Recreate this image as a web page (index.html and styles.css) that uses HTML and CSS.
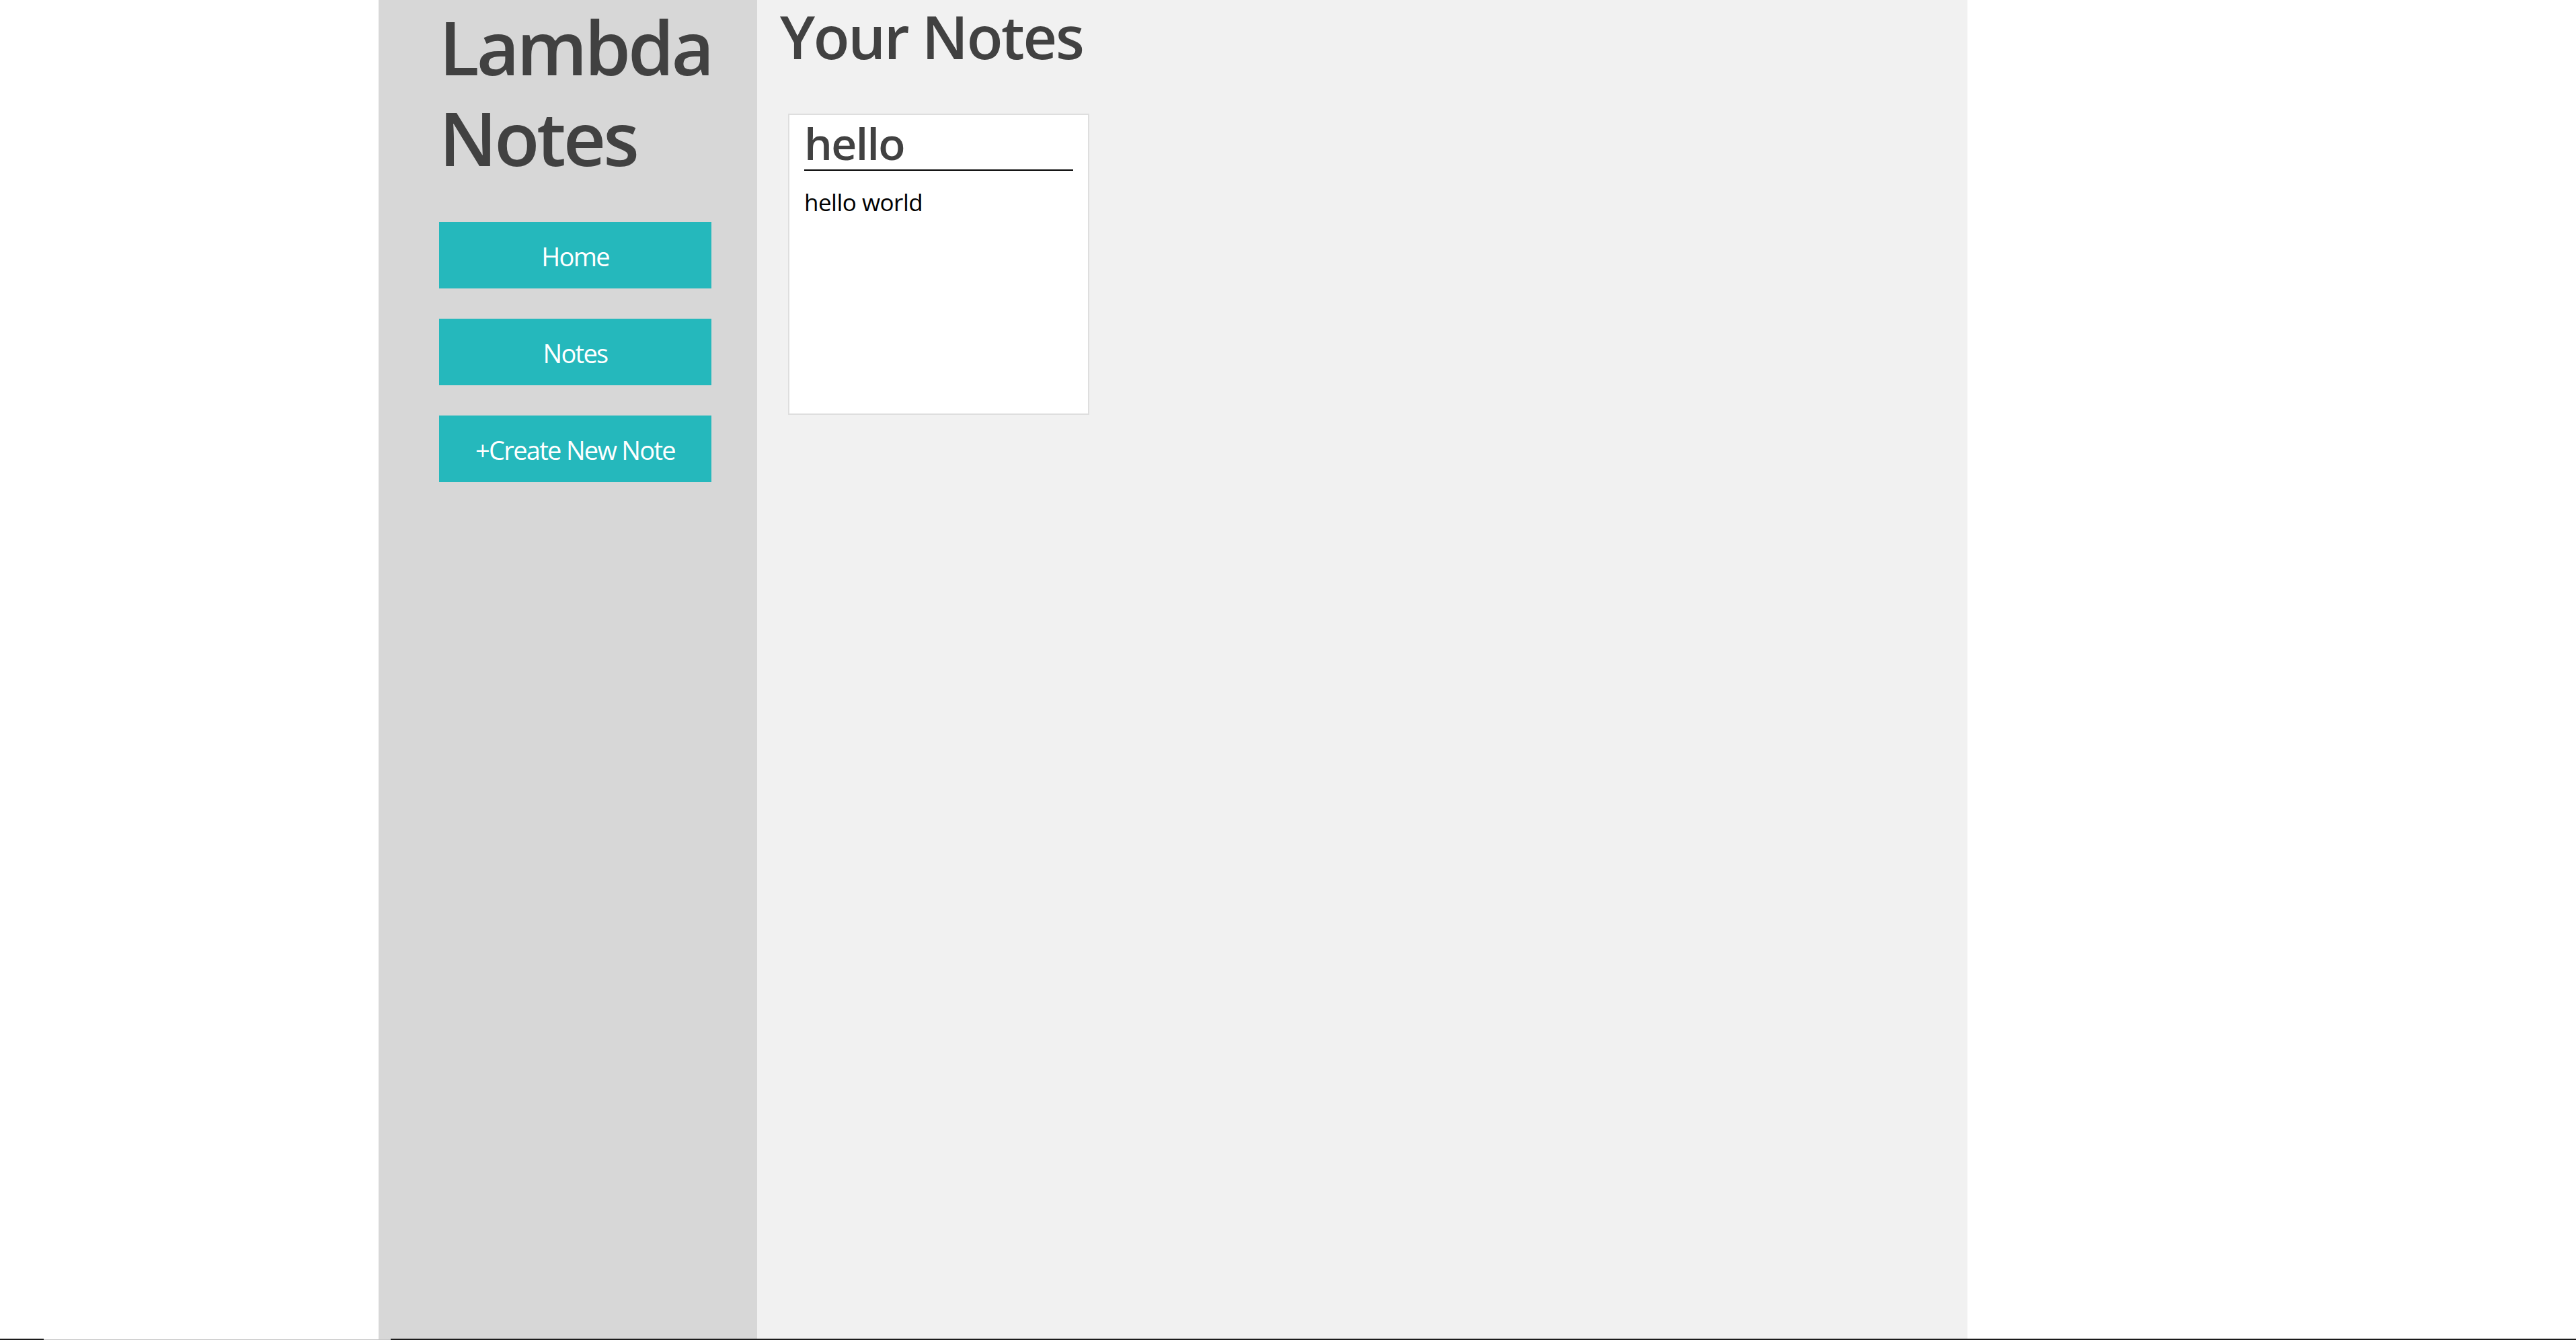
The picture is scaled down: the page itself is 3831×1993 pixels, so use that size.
FILE: index.html
```html
<!DOCTYPE html>
<html lang="en">
<head>
<meta charset="utf-8">
<title>Lambda Notes</title>
<link rel="stylesheet" href="styles.css">
</head>
<body>
<div class="app">
  <aside class="sidebar">
    <h1 class="brand">Lambda Notes</h1>
    <nav class="nav">
      <a class="nav-btn" href="#">Home</a>
      <a class="nav-btn" href="#">Notes</a>
      <a class="nav-btn" href="#">+Create New Note</a>
    </nav>
  </aside>
  <main class="main">
    <h2 class="page-title">Your Notes</h2>
    <div class="notes">
      <div class="note-card">
        <h3 class="note-title">hello</h3>
        <p class="note-body">hello world</p>
      </div>
    </div>
  </main>
</div>
<div class="taskbar">
  <span class="tb-dark tb-start"></span>
  <span class="tb-light"></span>
  <span class="tb-dark tb-rest"></span>
</div>
</body>
</html>
```
FILE: styles.css
```css
html, body {
  margin: 0;
  padding: 0;
  background: #ffffff;
  height: 100%;
}

body {
  font-family: "Open Sans", "Noto Sans", sans-serif;
  color: #414141;
  overflow: hidden;
}

.app {
  display: flex;
  margin-left: 563px;
  width: 2363px;
  height: 1993px;
}

.sidebar {
  width: 563px;
  flex: none;
  background: #d7d7d7;
  box-sizing: border-box;
  padding: 0 40px 0 90px;
}

.brand {
  margin: 0;
  font-size: 110px;
  line-height: 135px;
  font-weight: 600;
  color: #414141;
  letter-spacing: -4px;
  padding-top: 2px;
}

.nav {
  display: flex;
  flex-direction: column;
  gap: 45px;
  margin-top: 58px;
}

.nav-btn {
  display: block;
  width: 405px;
  height: 99px;
  box-sizing: border-box;
  padding-top: 3px;
  line-height: 96px;
  background: #25b8bc;
  color: #ffffff;
  text-align: center;
  text-decoration: none;
  font-size: 38px;
  letter-spacing: -1.7px;
}

.main {
  width: 1800px;
  flex: none;
  background: #f1f1f1;
  box-sizing: border-box;
  padding: 0 34px;
}

.page-title {
  margin: 0;
  font-size: 88px;
  line-height: 108px;
  font-weight: 600;
  color: #414141;
  letter-spacing: -2.3px;
}

.notes {
  display: flex;
  flex-wrap: wrap;
  gap: 40px;
  margin-top: 61px;
  padding-left: 12px;
}

.note-card {
  width: 448px;
  height: 448px;
  box-sizing: border-box;
  background: #ffffff;
  border: 2px solid #dedede;
  padding: 1px 22px 0;
}

.note-title {
  margin: 0;
  font-size: 66px;
  line-height: 80px;
  font-weight: 600;
  color: #414141;
  border-bottom: 2px solid #000000;
  letter-spacing: -1.6px;
}

.note-body {
  margin: 23px 0 0;
  font-size: 35px;
  color: #000000;
  letter-spacing: -0.5px;
}

.taskbar {
  position: fixed;
  left: 0;
  right: 0;
  bottom: 0;
  height: 2px;
  display: flex;
}

.tb-dark {
  background: #1b1b1b;
  height: 2px;
}

.tb-start {
  width: 65px;
}

.tb-light {
  width: 516px;
  height: 1px;
  margin-top: 1px;
  background: #c4c4c4;
}

.tb-rest {
  flex: 1;
}
```
